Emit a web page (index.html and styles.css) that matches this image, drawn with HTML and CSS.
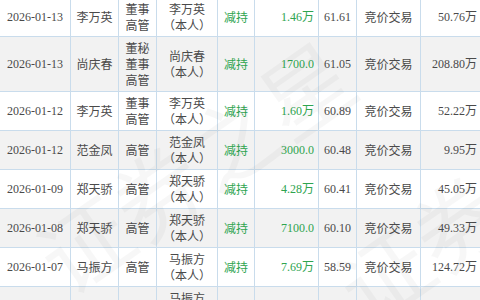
FILE: index.html
```html
<!DOCTYPE html>
<html lang="zh-CN">
<head>
<meta charset="utf-8">
<link rel="stylesheet" href="styles.css">
</head>
<body>
<div class="wrap">
  <table class="trades">
    <colgroup>
      <col class="c-date"><col class="c-name"><col class="c-pos"><col class="c-rel"><col class="c-act"><col class="c-amt"><col class="c-price"><col class="c-way"><col class="c-sum">
    </colgroup>
    <tbody>
      <tr><td>2026-01-13</td><td>李万英</td><td>董事<br>高管</td><td>李万英<br>（本人）</td><td class="green">减持</td><td class="num green">1.46万</td><td>61.61</td><td>竞价交易</td><td class="num">50.76万</td></tr>
      <tr class="alt"><td>2026-01-13</td><td>尚庆春</td><td>董秘<br>董事<br>高管</td><td>尚庆春<br>（本人）</td><td class="green">减持</td><td class="num green">1700.0</td><td>61.05</td><td>竞价交易</td><td class="num">208.80万</td></tr>
      <tr><td>2026-01-12</td><td>李万英</td><td>董事<br>高管</td><td>李万英<br>（本人）</td><td class="green">减持</td><td class="num green">1.60万</td><td>60.89</td><td>竞价交易</td><td class="num">52.22万</td></tr>
      <tr class="alt"><td>2026-01-12</td><td>范金凤</td><td>高管</td><td>范金凤<br>（本人）</td><td class="green">减持</td><td class="num green">3000.0</td><td>60.48</td><td>竞价交易</td><td class="num">9.95万</td></tr>
      <tr><td>2026-01-09</td><td>郑天骄</td><td>高管</td><td>郑天骄<br>（本人）</td><td class="green">减持</td><td class="num green">4.28万</td><td>60.41</td><td>竞价交易</td><td class="num">45.05万</td></tr>
      <tr class="alt"><td>2026-01-08</td><td>郑天骄</td><td>高管</td><td>郑天骄<br>（本人）</td><td class="green">减持</td><td class="num green">7100.0</td><td>60.10</td><td>竞价交易</td><td class="num">49.33万</td></tr>
      <tr><td>2026-01-07</td><td>马振方</td><td>高管</td><td>马振方<br>（本人）</td><td class="green">减持</td><td class="num green">7.69万</td><td>58.59</td><td>竞价交易</td><td class="num">124.72万</td></tr>
      <tr class="alt"><td>2026-01-07</td><td>马振方</td><td>高管</td><td>马振方<br>（本人）</td><td class="green">减持</td><td class="num green">1.20万</td><td>58.80</td><td>竞价交易</td><td class="num">70.56万</td></tr>
    </tbody>
  </table>
  <div class="watermark" aria-hidden="true">
    <span class="wm w1">证券之星</span>
    <span class="wm w2">证券之星</span>
  </div>
</div>
</body>
</html>
```
FILE: styles.css
```css
html, body {
  margin: 0;
  padding: 0;
  background: #fff;
  overflow: hidden;
}
.wrap {
  position: relative;
  width: 480px;
  height: 300px;
  overflow: hidden;
}
.trades {
  border-collapse: collapse;
  table-layout: fixed;
  width: 482px;
  margin: -3px 0 0 -1px;
  font-family: "Liberation Serif", "Noto Sans CJK SC", serif;
  font-size: 12px;
  line-height: 16px;
  color: #4a4a4a;
}
.trades td {
  border: 1px solid #c9dcec;
  padding: 3px 4px;
  text-align: center;
  vertical-align: middle;
  white-space: nowrap;
}
.trades td:nth-child(2), .trades td:nth-child(3), .trades td:nth-child(4), .trades td:nth-child(5), .trades td:nth-child(8) {
  font-family: "Noto Sans CJK SC", sans-serif;
}
.trades tr.alt td { background: #f2f2f2; }
.trades td.num { text-align: right; }
.trades td.green { color: #2ea44f; }
.c-date { width: 71px; }
.c-name { width: 48px; }
.c-pos { width: 38px; }
.c-rel { width: 61px; }
.c-act { width: 37px; }
.c-amt { width: 64px; }
.c-price { width: 38px; }
.c-way { width: 64px; }
.c-sum { width: 61px; }
.watermark {
  position: absolute;
  inset: 0;
  pointer-events: none;
}
.wm {
  position: absolute;
  font-family: "Noto Sans CJK SC", sans-serif;
  font-size: 90px;
  line-height: 1;
  color: rgba(0, 0, 0, 0.03);
  white-space: nowrap;
  transform: rotate(-35deg);
  transform-origin: left top;
}
.w1 { left: 20px; top: 230px; }
.w2 { left: 320px; top: 260px; }
```
